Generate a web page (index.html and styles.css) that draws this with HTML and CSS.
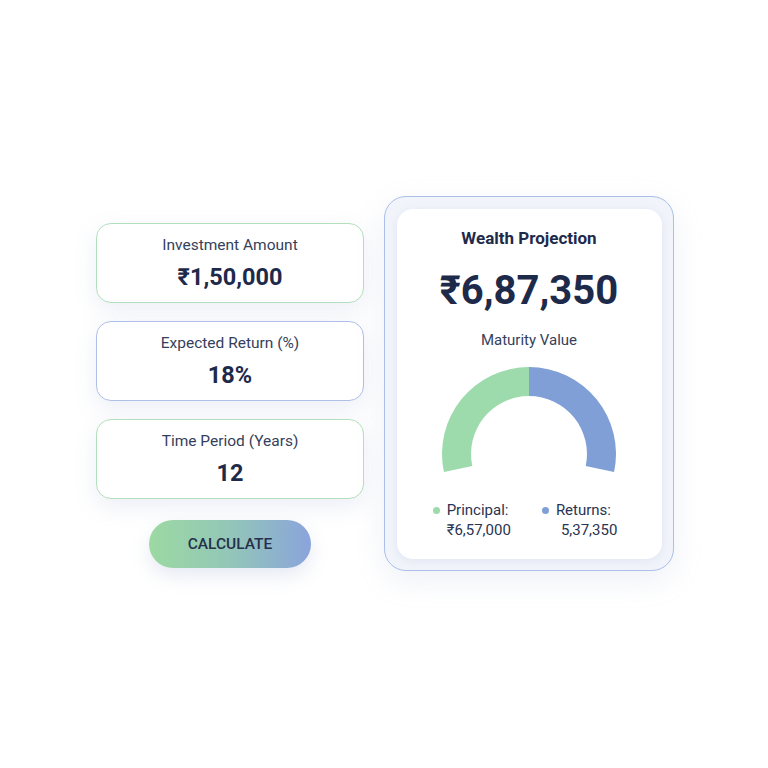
FILE: index.html
```html
<!DOCTYPE html>
<html lang="en">
<head>
<meta charset="utf-8">
<title>Wealth Projection</title>
<link rel="stylesheet" href="styles.css">
</head>
<body>
<main class="stage">
  <section class="inputs">
    <div class="field field-green">
      <div class="field-label">Investment Amount</div>
      <div class="field-value">₹1,50,000</div>
    </div>
    <div class="field field-blue">
      <div class="field-label">Expected Return (%)</div>
      <div class="field-value">18%</div>
    </div>
    <div class="field field-green">
      <div class="field-label">Time Period (Years)</div>
      <div class="field-value">12</div>
    </div>
    <button class="calc-btn" type="button">CALCULATE</button>
  </section>

  <section class="result-frame">
    <div class="result-card">
      <h2 class="result-title">Wealth Projection</h2>
      <div class="result-amount">₹6,87,350</div>
      <div class="result-sub">Maturity Value</div>
      <svg class="gauge" width="176" height="110" viewBox="-88 -89 176 110" aria-hidden="true">
        <path d="M -85.1 18.1 A 87 87 0 0 1 0 -87 L 0 -58 A 58 58 0 0 0 -56.7 12.1 Z" fill="#9ddbad"/>
        <path d="M 0 -87 A 87 87 0 0 1 85.1 18.1 L 56.7 12.1 A 58 58 0 0 0 0 -58 Z" fill="#809fd6"/>
      </svg>
      <div class="legend">
        <div class="legend-item">
          <span class="dot dot-green"></span>
          <div class="legend-text">
            <div>Principal:</div>
            <div>₹6,57,000</div>
          </div>
        </div>
        <div class="legend-item">
          <span class="dot dot-blue"></span>
          <div class="legend-text">
            <div>Returns:</div>
            <div class="indent">5,37,350</div>
          </div>
        </div>
      </div>
    </div>
  </section>
</main>
</body>
</html>
```

FILE: styles.css
```css
* { box-sizing: border-box; }

html, body {
  margin: 0;
  padding: 0;
  background: #ffffff;
}

body {
  font-family: Roboto, "Noto Sans", "Liberation Sans", sans-serif;
  color: #1e2a4a;
}

.stage {
  width: 768px;
  height: 768px;
  display: flex;
  justify-content: center;
  align-items: flex-start;
  gap: 20px;
  padding-top: 196px;
  padding-left: 2px;
}

.inputs {
  width: 268px;
  margin-top: 27px;
  display: flex;
  flex-direction: column;
  align-items: center;
  gap: 18px;
}

.field {
  width: 268px;
  height: 80px;
  background: #ffffff;
  border-radius: 15px;
  border: 1.5px solid #b3e0bc;
  display: flex;
  flex-direction: column;
  align-items: center;
  padding-top: 11px;
  gap: 8px;
  box-shadow: 0 8px 22px rgba(140, 155, 200, 0.16);
}

.field-blue { border-color: #aebfe8; }

.field-label {
  font-size: 15.5px;
  line-height: 20px;
  color: #353f5c;
}

.field-value {
  font-size: 23.5px;
  line-height: 28px;
  font-weight: 700;
  color: #1e2a4a;
}

.calc-btn {
  margin-top: 3px;
  width: 162px;
  height: 48px;
  border: none;
  border-radius: 24px;
  background: linear-gradient(90deg, #9cd9a2 0%, #93c6b8 50%, #8aa4dc 100%);
  font-family: inherit;
  font-size: 15.5px;
  font-weight: 500;
  color: #25304a;
  box-shadow: 0 8px 18px rgba(140, 160, 200, 0.22);
  padding: 0;
}

.result-frame {
  width: 290px;
  height: 375px;
  border: 1.5px solid #abbfe9;
  border-radius: 22px;
  background: #f1f4fa;
  padding: 11.5px;
  box-shadow: 0 10px 30px rgba(140, 155, 200, 0.14);
}

.result-card {
  height: 350px;
  background: #ffffff;
  border-radius: 16px;
  box-shadow: 0 2px 10px rgba(150, 165, 205, 0.18);
  display: flex;
  flex-direction: column;
  align-items: center;
  padding-top: 19px;
}

.result-title {
  margin: 0;
  font-size: 17px;
  line-height: 20px;
  font-weight: 700;
  color: #1e2a4a;
}

.result-amount {
  margin-top: 21px;
  font-size: 40px;
  line-height: 44px;
  font-weight: 700;
  color: #1e2a4a;
}

.result-sub {
  margin-top: 17px;
  font-size: 15px;
  line-height: 20px;
  color: #353f5c;
}

.gauge {
  display: block;
  margin-top: 15px;
}

.legend {
  margin-top: 25px;
  display: flex;
  gap: 31px;
  padding-right: 8px;
  font-size: 15px;
  line-height: 20px;
  color: #2a3452;
}

.legend-item {
  display: flex;
  align-items: flex-start;
  gap: 7px;
}

.dot {
  width: 7px;
  height: 7px;
  border-radius: 50%;
  margin-top: 7px;
  flex: none;
}

.dot-green { background: #9ddbad; }
.dot-blue { background: #809fd6; }

.indent { padding-left: 5px; }
```
